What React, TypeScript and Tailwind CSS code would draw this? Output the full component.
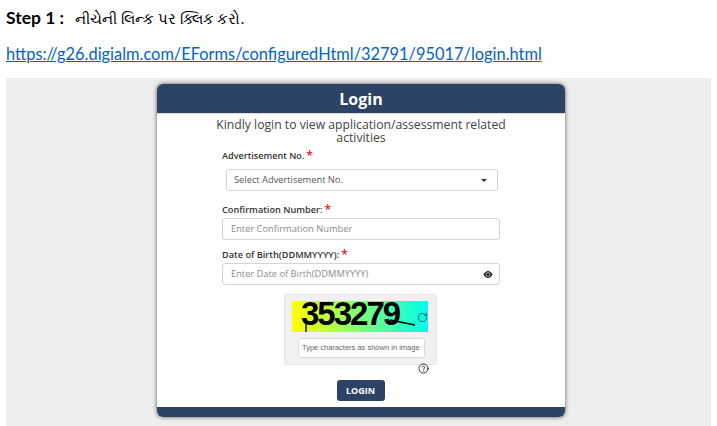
import { RotateCw, CircleHelp } from "lucide-react";

const openSans = "font-['Open_Sans',sans-serif]";

function Star() {
  return <span className="ml-[2px] text-[12px] leading-none text-[#e8101a]">*</span>;
}

export default function App() {
  return (
    <main className="h-[426px] w-[717px] overflow-hidden bg-white font-['Lato',sans-serif] text-black">
      <div className="flex h-[36px] items-center pl-[6px] pt-[1px]">
        <span className="text-[17.5px] font-bold">Step 1 :</span>
        <span className="ml-[11px] font-['Noto_Sans',sans-serif] text-[14.7px]">નીચેની લિન્ક પર ક્લિક કરો.</span>
      </div>
      <div className="flex h-[34px] items-center pl-[6px] pt-[2px]">
        <a href="#" className="text-[16.4px] leading-[20px] text-[#0563c1] underline">
          https://g26.digialm.com/EForms/configuredHtml/32791/95017/login.html
        </a>
      </div>

      <section className={`ml-[6px] mt-[8px] h-[348px] w-[705px] bg-[#eeeeee] pl-[151px] pt-[6px] ${openSans}`}>
        <div className="h-[333px] w-[408px] overflow-hidden rounded-[6px] bg-white shadow-[0_0_4px_rgba(0,0,0,0.65)]">
          <h1 className="flex h-[30px] items-center justify-center border-b border-[#d9dde3] bg-[#2c4365] text-[16px] font-bold text-white">
            Login
          </h1>

          <p className="mx-auto mt-[4px] w-[300px] text-center text-[12.2px] leading-[13px] text-[#444]">
            Kindly login to view application/assessment related activities
          </p>

          <div className="mt-[6px] flex items-center pl-[65px] text-[9.1px] font-semibold leading-[12px] text-[#333]">
            Advertisement No.<Star />
          </div>

          <div className="ml-[69px] mt-[7px] flex h-[22px] w-[272px] items-center justify-between rounded-[3px] border border-[#d4d4d4] bg-white pl-[7px] pr-[10px] text-[9.3px] text-[#555]">
            Select Advertisement No.
            <span className="h-0 w-0 border-x-[3px] border-t-[3px] border-x-transparent border-t-[#333]" />
          </div>

          <div className="mt-[13px] flex items-center pl-[65px] text-[9.2px] font-semibold leading-[12px] text-[#333]">
            Confirmation Number:<Star />
          </div>
          <div className="ml-[65px] mt-[2px] flex h-[22px] w-[278px] items-center rounded-[3px] border border-[#d4d4d4] pl-[8px] text-[9.3px] text-[#8d8d8d]">
            Enter Confirmation Number
          </div>

          <div className="mt-[9px] flex items-center pl-[65px] text-[9.2px] font-semibold leading-[12px] text-[#333]">
            Date of Birth(DDMMYYYY):<Star />
          </div>
          <div className="ml-[65px] mt-[2px] flex h-[22px] w-[278px] items-center justify-between rounded-[3px] border border-[#d4d4d4] pl-[8px] pr-[6px] text-[9.3px] text-[#8d8d8d]">
            Enter Date of Birth(DDMMYYYY)
            <svg width="10" height="7" viewBox="0 0 11 8">
              <path d="M0.3 4 C2 1 4 0 5.5 0 C7 0 9 1 10.7 4 C9 7 7 8 5.5 8 C4 8 2 7 0.3 4 Z" fill="#222" />
              <circle cx="5.5" cy="4" r="2.3" fill="none" stroke="#fff" strokeWidth="0.7" />
            </svg>
          </div>

          <div className="relative ml-[127px] mt-[9px] h-[71px] w-[153px] rounded-[2px] border border-[#e6e6e6] bg-[#f1f1f1] pl-[7px] pt-[6px]">
            <div className="relative flex h-[31px] w-[136px] items-center bg-[linear-gradient(90deg,#ffff00,#00ffee)] pb-[5px] pl-[9px] font-['Liberation_Sans',sans-serif] text-[33px] font-bold leading-[26px] tracking-[-2px] text-black">
              353279
              <svg className="absolute inset-0" width="136" height="31" viewBox="0 0 136 31" fill="none" stroke="#000" strokeWidth="1.4">
                <path d="M14 18 L14 31" />
                <path d="M98 19 L123 24" />
              </svg>
            </div>
            <RotateCw size={11} strokeWidth={2} className="absolute left-[132px] top-[17px] text-[#2f5560]" />
            <div className="ml-[6px] mt-[6px] flex h-[20px] w-[127px] items-center rounded-[3px] border border-[#dcdcdc] bg-white pl-[3px] font-['Liberation_Sans',sans-serif] text-[7.5px] text-[#666]">
              Type characters as shown in image
            </div>
            <CircleHelp size={11} className="absolute left-[133px] top-[68px] text-[#222]" />
          </div>

          <div className="mt-[15px] flex justify-center">
            <button className="ml-[-1px] h-[21px] w-[48px] rounded-[3px] bg-[#2c4365] text-[9px] font-bold text-white">LOGIN</button>
          </div>

          <div className="mt-[6px] h-[10px] bg-[#2c4365]" />
        </div>
      </section>
    </main>
  );
}
